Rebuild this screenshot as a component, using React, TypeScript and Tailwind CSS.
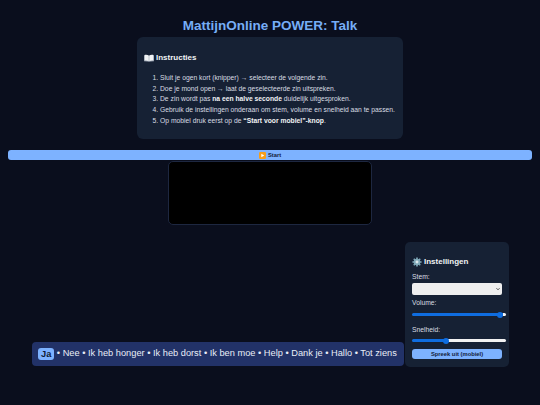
import { useState } from "react";

const steps = [
  <>Sluit je ogen kort (knipper) → selecteer de volgende zin.</>,
  <>Doe je mond open → laat de geselecteerde zin uitspreken.</>,
  <>
    De zin wordt pas <strong>na een halve seconde</strong> duidelijk uitgesproken.
  </>,
  <>Gebruik de instellingen onderaan om stem, volume en snelheid aan te passen.</>,
  <>
    Op mobiel druk eerst op de <strong>“Start voor mobiel”-knop</strong>.
  </>,
];

const phrases = ["Nee", "Ik heb honger", "Ik heb dorst", "Ik ben moe", "Help", "Dank je", "Hallo", "Tot ziens"];

function BookIcon() {
  return (
    <svg viewBox="0 0 16 12" className="h-[8px] w-[10px]">
      <path d="M0 1.500 8 2.500 16 1.500V11L8 12 0 11Z" fill="#8a94a3" />
      <path d="M1 1C3.500.5 6 .8 7.600 2V11C6 10 3.500 9.700 1 10Z" fill="#f1f3f5" />
      <path d="M15 1C12.500.5 10 .8 8.400 2V11C10 10 12.500 9.700 15 10Z" fill="#f1f3f5" />
    </svg>
  );
}

function PlayIcon() {
  return (
    <svg viewBox="0 0 12 12" className="h-[7px] w-[7px]">
      <rect width="12" height="12" rx="2" fill="#f59e1b" />
      <path d="M4 3 9 6 4 9Z" fill="#fff" />
    </svg>
  );
}

function GearIcon() {
  return (
    <svg viewBox="0 0 24 24" className="h-[10px] w-[10px]">
      <g stroke="#7fa8b8" strokeWidth="4">
        <path d="M12 1V23M1 12H23M4.200 4.200 19.800 19.800M19.800 4.200 4.200 19.800" />
      </g>
      <circle cx="12" cy="12" r="8" fill="#7fa8b8" />
      <circle cx="12" cy="12" r="3.500" fill="#dbe6ea" />
    </svg>
  );
}

function Slider({ value, onChange }: { value: number; onChange: (v: number) => void }) {
  return (
    <input
      type="range"
      min={0}
      max={100}
      value={value}
      onChange={(e) => onChange(Number(e.target.value))}
      style={{ background: `linear-gradient(to right, #0f6de0 ${value}%, #f2f2f2 ${value}%)` }}
      className="block h-[3px] w-[94px] appearance-none rounded-full [&::-webkit-slider-thumb]:h-[6px] [&::-webkit-slider-thumb]:w-[6px] [&::-webkit-slider-thumb]:appearance-none [&::-webkit-slider-thumb]:rounded-full [&::-webkit-slider-thumb]:bg-[#0f6de0]"
    />
  );
}

export default function App() {
  const [volume, setVolume] = useState(97);
  const [rate, setRate] = useState(35);

  return (
    <div className="flex h-[405px] w-[540px] flex-col overflow-hidden bg-[#0a0e1d] font-['Liberation_Sans',Arial,sans-serif] text-[#e5e7eb]">
      <h1 className="mt-[17px] text-center text-[13.500px] leading-[17px] font-bold text-[#76adf6]">
        MattijnOnline POWER: Talk
      </h1>

      <section className="mx-auto mt-[3px] h-[102px] w-[266px] rounded-[6px] bg-[#162134] pt-[15px] pl-[7px]">
        <h2 className="flex items-center gap-[2px] text-[8px] leading-[12px] font-bold text-[#f1f3f5]">
          <BookIcon />
          Instructies
        </h2>
        <ol className="mt-[9px] list-decimal pl-[16px] text-[6.750px] leading-[10.700px] text-[#d9dde3]">
          {steps.map((step, i) => (
            <li key={i} className="[&>strong]:font-bold [&>strong]:text-[#f1f3f5]">
              {step}
            </li>
          ))}
        </ol>
      </section>

      <button className="mx-[8px] mt-[11px] flex h-[10px] items-center justify-center gap-[2px] rounded-[3px] bg-[#7db2ff] text-[5.800px] font-bold text-[#12213a]">
        <PlayIcon />
        Start
      </button>

      <div className="mx-auto mt-[1px] h-[64px] w-[204px] rounded-[5px] border border-[#1d2740] bg-black" />

      <div className="mt-[17px] flex items-end">
        <div className="mb-[1px] ml-[32px] flex h-[24px] w-[372px] items-center whitespace-pre rounded-[4px] bg-[#223268] pl-[6px] text-[9.250px] text-[#e8edf7]">
          <span className="rounded-[3px] bg-[#7db2ff] px-[3px] font-bold leading-[12px] text-[#0d1a33]">Ja</span>
          {phrases.map((p) => (
            <span key={p}>{` • ${p}`}</span>
          ))}
        </div>

        <aside className="ml-[1px] h-[125px] w-[104px] rounded-[5px] bg-[#162134] px-[7px] pt-[14px]">
          <h3 className="flex items-center gap-[2px] text-[8px] leading-[11px] font-bold text-[#f1f3f5]">
            <GearIcon />
            Instellingen
          </h3>
          <label className="mt-[6px] block text-[6.750px] leading-[8px] text-[#d9dde3]">Stem:</label>
          <div className="relative mt-[2px] w-[90px]">
            <select className="block h-[12px] w-[90px] appearance-none rounded-[2px] bg-[#efefef] text-[6px] text-black" />
            <svg viewBox="0 0 8 8" className="absolute top-[4px] right-[2px] h-[4px] w-[4px]">
              <path d="M1 2.500 4 5.500 7 2.500" fill="none" stroke="#222" strokeWidth="1.600" />
            </svg>
          </div>
          <label className="mt-[4px] block text-[6.750px] leading-[8px] text-[#d9dde3]">Volume:</label>
          <div className="mt-[6px]">
            <Slider value={volume} onChange={setVolume} />
          </div>
          <label className="mt-[10px] block text-[6.750px] leading-[8px] text-[#d9dde3]">Snelheid:</label>
          <div className="mt-[5px]">
            <Slider value={rate} onChange={setRate} />
          </div>
          <button className="mt-[7px] block h-[10px] w-[90px] rounded-[3px] bg-[#7db2ff] text-[5.800px] font-bold text-[#12213a]">
            Spreek uit (mobiel)
          </button>
        </aside>
      </div>
    </div>
  );
}
